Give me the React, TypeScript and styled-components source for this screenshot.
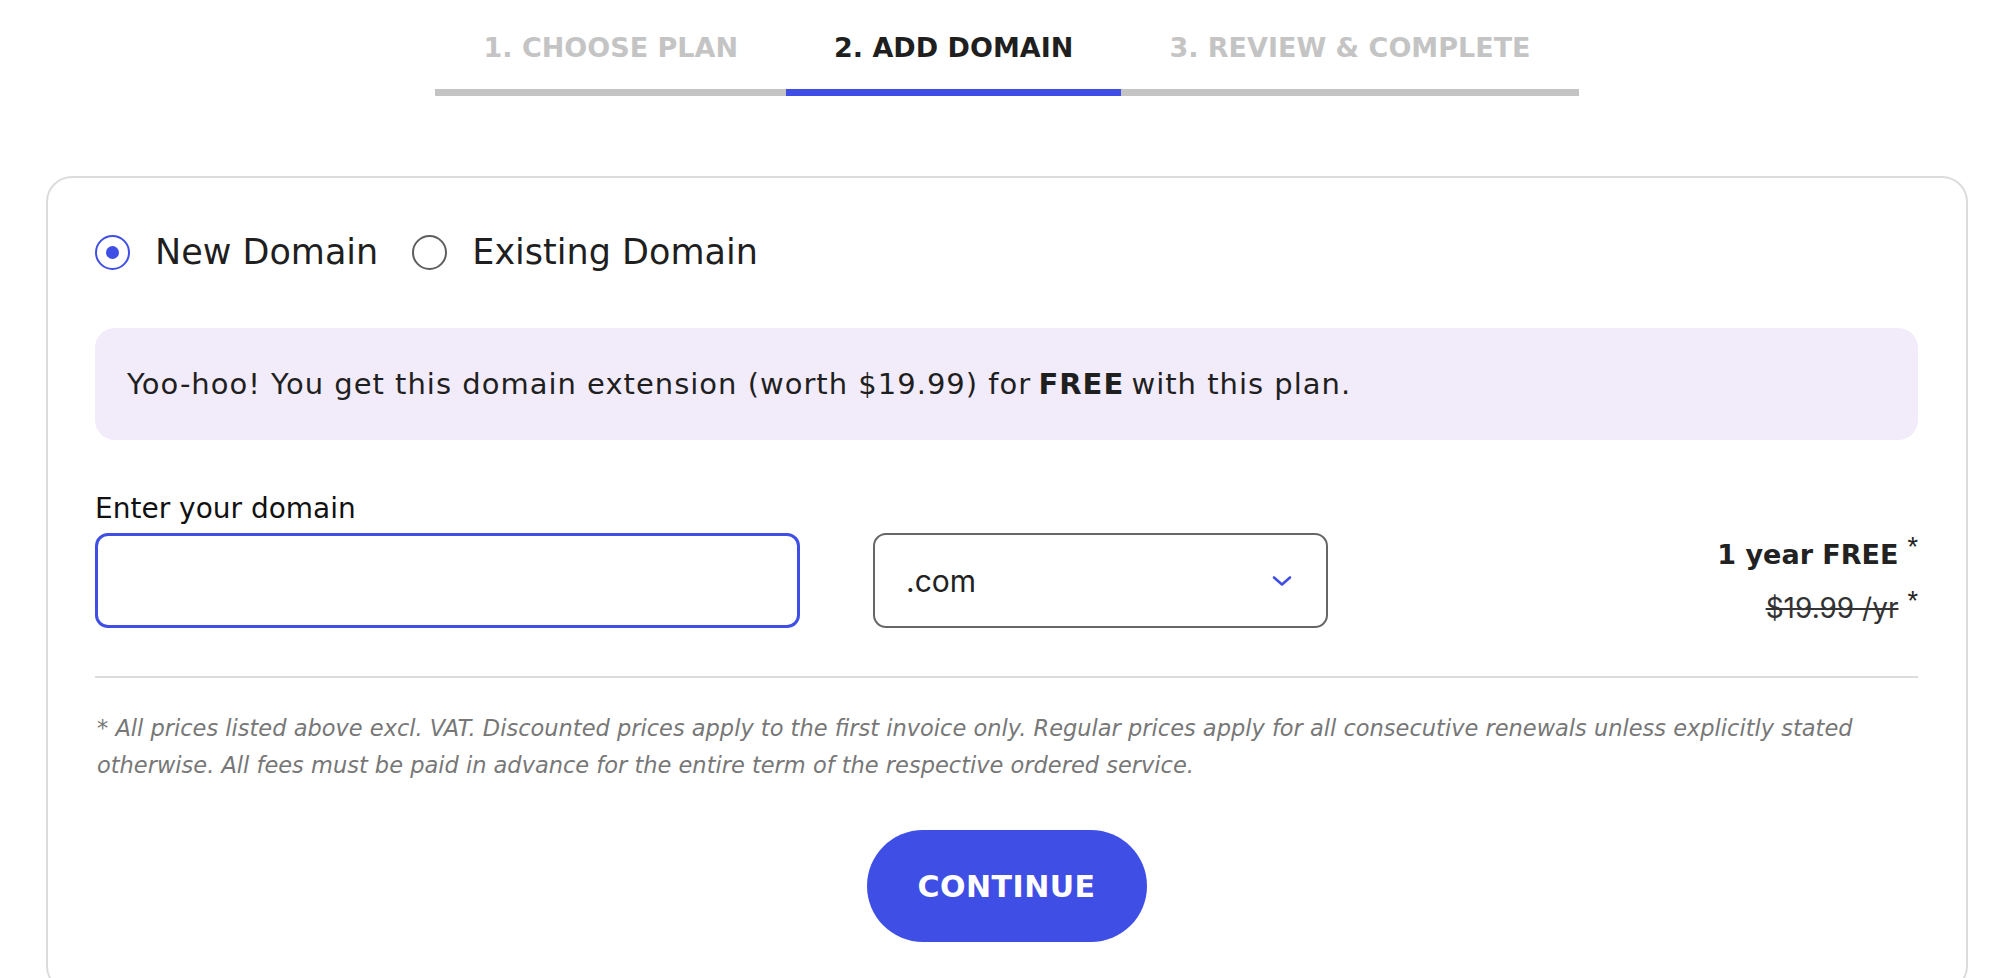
import React, { useState } from 'react';
import styled, { createGlobalStyle } from 'styled-components';

const GlobalStyle = createGlobalStyle`
    html, body {
        margin: 0;
        padding: 0;
        background: #ffffff;
    }
    body {
        font-family: "DejaVu Sans", Inter, sans-serif;
        color: #1f1f1f;
    }
`;

const steps = ['1. CHOOSE PLAN', '2. ADD DOMAIN', '3. REVIEW & COMPLETE'];

const App = () => {
    const [domainType, setDomainType] = useState<'new' | 'existing'>('new');
    const [domain, setDomain] = useState('');

    return (
        <Page>
            <GlobalStyle />
            <Stepper>
                {steps.map((label, i) => (
                    <Step key={label} active={i === 1}>
                        {label}
                    </Step>
                ))}
            </Stepper>

            <Card>
                <RadioRow>
                    <RadioOption onClick={() => setDomainType('new')}>
                        <RadioCircle checked={domainType === 'new'} />
                        New Domain
                    </RadioOption>
                    <RadioOption onClick={() => setDomainType('existing')}>
                        <RadioCircle checked={domainType === 'existing'} />
                        Existing Domain
                    </RadioOption>
                </RadioRow>

                <Promo>
                    Yoo-hoo! You get this domain extension (worth $19.99) for <b>FREE</b> with this plan.
                </Promo>

                <FormRow>
                    <Field>
                        <Label htmlFor="domain">Enter your domain</Label>
                        <DomainInput
                            id="domain"
                            value={domain}
                            onChange={(e) => setDomain(e.target.value)}
                        />
                    </Field>
                    <Select>
                        <span>.com</span>
                        <svg width="20" height="12" viewBox="0 0 20 12" fill="none">
                            <path d="M2 2.5 L10 9.5 L18 2.5" stroke="#3f4fe6" strokeWidth="2.6" strokeLinecap="round" strokeLinejoin="round" />
                        </svg>
                    </Select>
                    <Price>
                        <PriceFree>
                            1 year FREE<Star>*</Star>
                        </PriceFree>
                        <PriceOld>
                            <s>$19.99 /yr</s><Star>*</Star>
                        </PriceOld>
                    </Price>
                </FormRow>

                <Divider />

                <Footnote>
                    * All prices listed above excl. VAT. Discounted prices apply to the first invoice only. Regular prices apply for all consecutive renewals unless explicitly stated otherwise. All fees must be paid in advance for the entire term of the respective ordered service.
                </Footnote>

                <ButtonRow>
                    <ContinueButton>CONTINUE</ContinueButton>
                </ButtonRow>
            </Card>
        </Page>
    );
};

const Page = styled.div`
    width: 1922px;
    margin-left: 46px;
`;

const Stepper = styled.div`
    display: flex;
    justify-content: center;
    padding-top: 28px;
`;

const Step = styled.div<{ active?: boolean }>`
    padding: 0 48px 21px;
    font-size: 27px;
    line-height: 40px;
    font-weight: 600;
    color: ${(p) => (p.active ? '#1f1f1f' : '#c4c4c4')};
    border-bottom: 7px solid ${(p) => (p.active ? '#3f4fe6' : '#c4c4c4')};
    white-space: nowrap;
`;

const Card = styled.div`
    margin-top: 80px;
    border: 2px solid #dcdcdc;
    border-radius: 26px;
    padding: 54px 48px 48px 47px;
`;

const RadioRow = styled.div`
    display: flex;
    align-items: center;
    gap: 34px;
    height: 40px;
`;

const RadioOption = styled.label`
    display: flex;
    align-items: center;
    gap: 25px;
    font-size: 35px;
    color: #1f1f1f;
    cursor: pointer;
`;

const RadioCircle = styled.span<{ checked?: boolean }>`
    position: relative;
    box-sizing: border-box;
    width: 35px;
    height: 35px;
    border-radius: 50%;
    border: 2px solid ${(p) => (p.checked ? '#3f4fe6' : '#5e5e5e')};

    &::after {
        content: '';
        display: ${(p) => (p.checked ? 'block' : 'none')};
        position: absolute;
        left: 50%;
        top: 50%;
        width: 13px;
        height: 13px;
        margin: -6.5px 0 0 -6.5px;
        border-radius: 50%;
        background: #3f4fe6;
    }
`;

const Promo = styled.div`
    margin-top: 56px;
    height: 112px;
    display: flex;
    align-items: center;
    padding: 0 32px;
    box-sizing: border-box;
    background: #f2ecfa;
    border-radius: 20px;
    font-size: 29px;
    letter-spacing: 1px;
    color: #1f1f1f;

    b {
        font-weight: 700;
        margin: 0 0.25em;
    }
`;

const FormRow = styled.div`
    margin-top: 51px;
    display: flex;
    align-items: flex-end;
`;

const Field = styled.div`
    display: flex;
    flex-direction: column;
    width: 705px;
`;

const Label = styled.label`
    font-size: 28px;
    line-height: 36px;
    font-weight: 500;
    color: #111;
    margin-bottom: 6px;
`;

const DomainInput = styled.input`
    box-sizing: border-box;
    height: 95px;
    width: 100%;
    border: 3px solid #3f4fe6;
    border-radius: 13px;
    padding: 0 28px;
    font-size: 28px;
    font-family: inherit;
    outline: none;
`;

const Select = styled.div`
    box-sizing: border-box;
    margin-left: 73px;
    width: 455px;
    height: 95px;
    border: 2px solid #666;
    border-radius: 13px;
    display: flex;
    align-items: center;
    justify-content: space-between;
    padding: 0 34px 0 31px;
    font-family: Inter, sans-serif;
    font-size: 30px;
    color: #222;
`;

const Price = styled.div`
    flex: 1;
    height: 95px;
    display: flex;
    flex-direction: column;
    justify-content: center;
    align-items: flex-end;
    gap: 22px;
`;

const PriceFree = styled.div`
    font-size: 27px;
    line-height: 32px;
    font-weight: 700;
    color: #222;
`;

const PriceOld = styled.div`
    font-family: Inter, sans-serif;
    font-size: 28px;
    line-height: 30px;
    color: #333;
`;

const Star = styled.sup`
    font-family: "Liberation Sans", Arial, sans-serif;
    font-weight: 400;
    font-size: 27px;
    margin-left: 9px;
    vertical-align: 8px;
    line-height: 0;
    color: #222;
`;

const Divider = styled.hr`
    margin: 48px 0 0;
    border: none;
    height: 2px;
    background: #dcdcdc;
`;

const Footnote = styled.p`
    margin: 32px 0 0;
    padding-left: 2px;
    font-family: "DejaVu Sans", sans-serif;
    font-style: italic;
    font-size: 22.5px;
    line-height: 37px;
    color: #777;
`;

const ButtonRow = styled.div`
    display: flex;
    justify-content: center;
    margin-top: 46px;
`;

const ContinueButton = styled.button`
    width: 280px;
    height: 112px;
    border: none;
    border-radius: 56px;
    background: #3f4fe6;
    color: #fff;
    font-family: inherit;
    font-size: 30px;
    font-weight: 600;
    letter-spacing: 0.5px;
    cursor: pointer;
`;

export default App;
